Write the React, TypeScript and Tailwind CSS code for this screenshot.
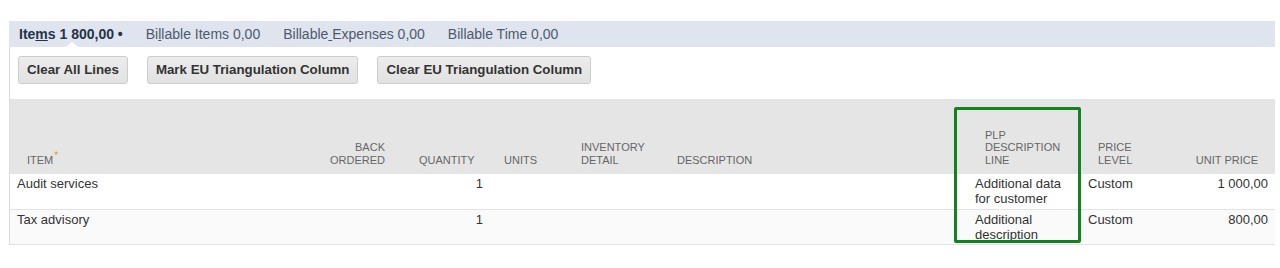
const COLS = [290, 102, 88, 74, 96, 308, 113, 79, 115];

const ROWS = [
  { item: "Audit services", qty: "1", plp: "Additional data for customer", level: "Custom", price: "1 000,00", bg: "bg-white" },
  { item: "Tax advisory", qty: "1", plp: "Additional description", level: "Custom", price: "800,00", bg: "bg-[#fafafa]" },
];

function Btn({ children }: { children: React.ReactNode }) {
  return (
    <button className="h-[28px] rounded-[3px] border border-[#cccccc] bg-gradient-to-b from-[#ececec] to-[#e2e2e2] px-[8px] text-[13.3px] font-bold text-[#333333]">
      {children}
    </button>
  );
}

export default function App() {
  return (
    <div className="relative h-[268px] w-[1280px] bg-white pl-[9px] pr-[5px] pt-[21px] font-['Liberation_Sans',Arial,sans-serif]">
      {/* tabs */}
      <div className="relative flex h-[26px] items-center gap-[23px] bg-[#dfe4ee] pl-[10px] text-[14px] text-[#4d5a6e]">
        <span className="font-bold text-[#253249]">
          Ite<u>m</u>s 1 800,00 •
        </span>
        <span>
          Bi<u>l</u>lable Items 0,00
        </span>
        <span>
          Billable<u> </u>Expenses 0,00
        </span>
        <span>Billable Time 0,00</span>
        <span className="absolute bottom-0 left-[57px] h-0 w-0 border-x-[6px] border-b-[5px] border-x-transparent border-b-white" />
      </div>

      <div className="border-l border-[#dcdcdc]">
        {/* buttons */}
        <div className="flex h-[52px] gap-[19px] pl-[8px] pt-[9px]">
          <Btn>Clear All Lines</Btn>
          <Btn>Mark EU Triangulation Column</Btn>
          <Btn>Clear EU Triangulation Column</Btn>
        </div>

        {/* table */}
        <table className="w-[1265px] table-fixed border-collapse">
          <colgroup>
            {COLS.map((w, i) => (
              <col key={i} style={{ width: w }} />
            ))}
          </colgroup>
          <thead>
            <tr className="h-[75px] bg-[#e5e5e5] text-[11px] uppercase leading-[12.5px] text-[#666666]">
              <th className="px-[17px] pb-[8px] text-left align-bottom font-normal">
                ITEM<sup className="ml-[1px] text-[10px] text-[#d9a126]">*</sup>
              </th>
              <th className="px-[17px] pb-[8px] text-right align-bottom font-normal">
                BACK<br />ORDERED
              </th>
              <th className="px-[17px] pb-[8px] text-right align-bottom font-normal">QUANTITY</th>
              <th className="px-[14px] pb-[8px] text-left align-bottom font-normal">UNITS</th>
              <th className="px-[17px] pb-[8px] text-left align-bottom font-normal">
                INVENTORY<br />DETAIL
              </th>
              <th className="px-[17px] pb-[8px] text-left align-bottom font-normal">DESCRIPTION</th>
              <th className="px-[17px] pb-[8px] text-left align-bottom font-normal">
                PLP<br />DESCRIPTION<br />LINE
              </th>
              <th className="px-[17px] pb-[8px] text-left align-bottom font-normal">
                PRICE<br />LEVEL
              </th>
              <th className="px-[17px] pb-[8px] text-right align-bottom font-normal">UNIT PRICE</th>
            </tr>
          </thead>
          <tbody>
            {ROWS.map((r) => (
              <tr key={r.item} className={`h-[35px] border-b border-[#e3e3e3] text-[13px] leading-[15px] text-[#333333] ${r.bg}`}>
                <td className="px-[7px] pt-[2px] align-top">{r.item}</td>
                <td className="px-[7px] pt-[2px] align-top" />
                <td className="px-[7px] pt-[2px] text-right align-top">{r.qty}</td>
                <td className="px-[7px] pt-[2px] align-top" />
                <td className="px-[7px] pt-[2px] align-top" />
                <td className="px-[7px] pt-[2px] align-top" />
                <td className="px-[7px] pt-[2px] align-top">
                  <div className="max-h-[31px] overflow-hidden">{r.plp}</div>
                </td>
                <td className="px-[7px] pt-[2px] align-top">{r.level}</td>
                <td className="px-[7px] pt-[2px] text-right align-top">{r.price}</td>
              </tr>
            ))}
          </tbody>
        </table>
      </div>

      {/* highlight box */}
      <div className="absolute left-[954px] top-[107px] h-[136px] w-[127px] rounded-[2px] border-[3px] border-[#15801f]" />
    </div>
  );
}
